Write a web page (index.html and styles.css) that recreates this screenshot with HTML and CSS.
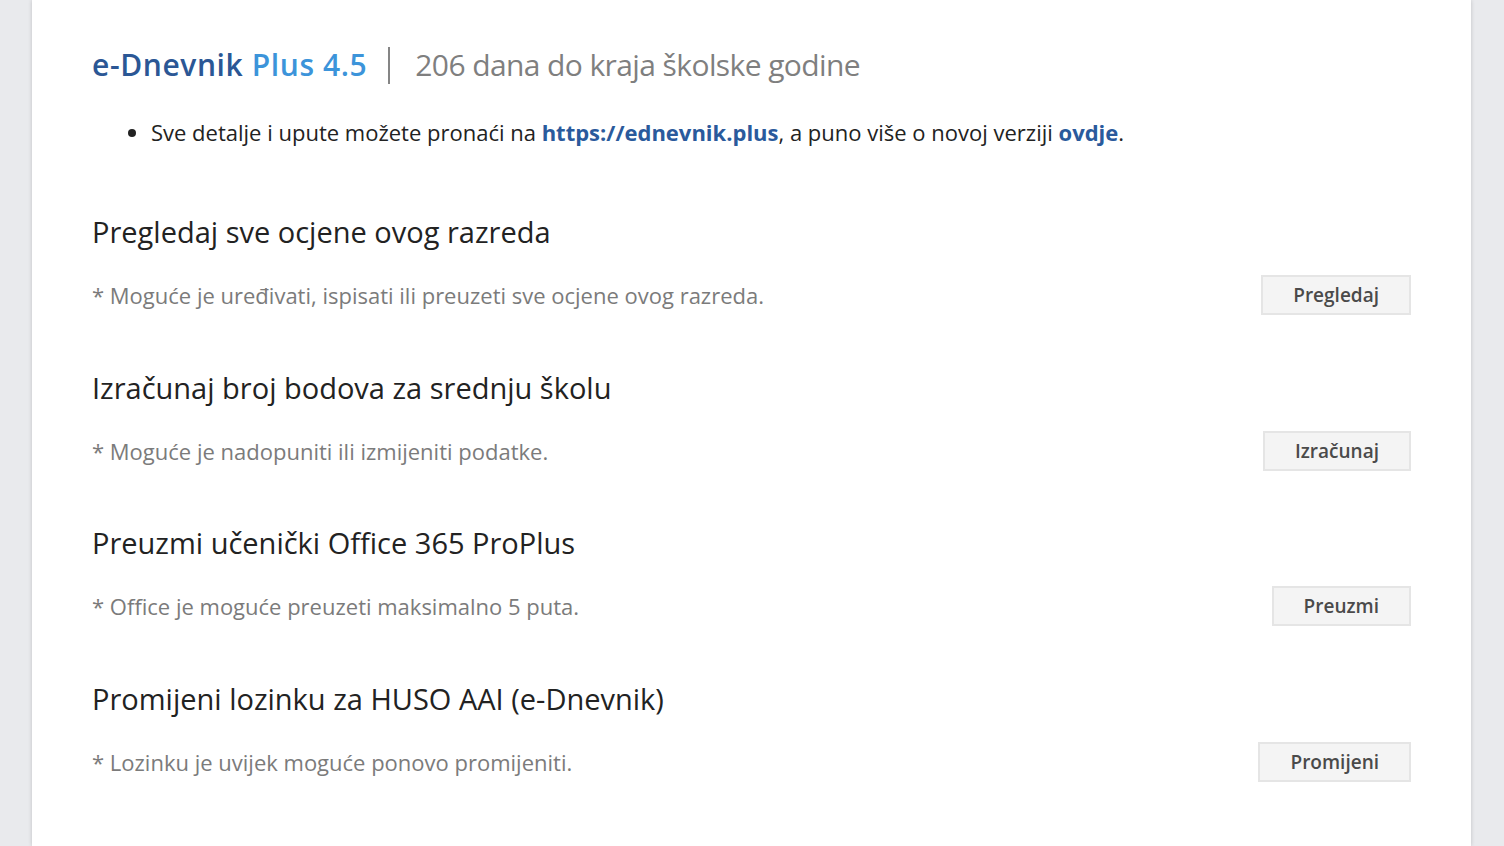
FILE: index.html
```html
<!DOCTYPE html>
<html lang="hr">
<head>
<meta charset="utf-8">
<title>e-Dnevnik Plus</title>
<link rel="stylesheet" href="styles.css">
</head>
<body>
<main class="card">
  <header class="title-row">
    <h1 class="brand"><span class="brand-main">e-Dnevnik</span> <span class="brand-plus">Plus 4.5</span></h1>
    <span class="divider"></span>
    <span class="days">206 dana do kraja školske godine</span>
  </header>
  <ul class="notes">
    <li>Sve detalje i upute možete pronaći na <a href="#">https://ednevnik.plus</a>, a puno više o novoj verziji <a href="#">ovdje</a>.</li>
  </ul>

  <section class="action">
    <h2 class="action-title">Pregledaj sve ocjene ovog razreda</h2>
    <div class="action-row">
      <p class="action-desc">* Moguće je uređivati, ispisati ili preuzeti sve ocjene ovog razreda.</p>
      <button class="btn">Pregledaj</button>
    </div>
  </section>

  <section class="action">
    <h2 class="action-title">Izračunaj broj bodova za srednju školu</h2>
    <div class="action-row">
      <p class="action-desc">* Moguće je nadopuniti ili izmijeniti podatke.</p>
      <button class="btn">Izračunaj</button>
    </div>
  </section>

  <section class="action">
    <h2 class="action-title">Preuzmi učenički Office 365 ProPlus</h2>
    <div class="action-row">
      <p class="action-desc">* Office je moguće preuzeti maksimalno 5 puta.</p>
      <button class="btn">Preuzmi</button>
    </div>
  </section>

  <section class="action">
    <h2 class="action-title">Promijeni lozinku za HUSO AAI (e-Dnevnik)</h2>
    <div class="action-row">
      <p class="action-desc">* Lozinku je uvijek moguće ponovo promijeniti.</p>
      <button class="btn">Promijeni</button>
    </div>
  </section>
</main>
</body>
</html>
```
FILE: styles.css
```css
html, body {
  margin: 0;
  padding: 0;
  height: 100%;
}
body {
  background: #e9eaed;
  font-family: "Open Sans", "Liberation Sans", sans-serif;
  overflow: hidden;
}
.card {
  box-sizing: border-box;
  margin: 0 33px 0 32px;
  min-height: 100%;
  background: #ffffff;
  box-shadow: 0 0 4px rgba(0, 0, 0, 0.18);
  padding: 45px 60px 0 60px;
}
.title-row {
  display: flex;
  align-items: center;
  height: 40px;
}
.brand {
  margin: 0;
  font-size: 30px;
  font-weight: 600;
  letter-spacing: 0.6px;
  line-height: 40px;
  white-space: nowrap;
}
.brand-main { color: #2b5795; }
.brand-plus { color: #3c94da; }
.divider {
  width: 2px;
  height: 37px;
  background: #858585;
  margin: 0 25px 0 21px;
}
.days {
  font-size: 30px;
  line-height: 40px;
  letter-spacing: -0.6px;
  color: #7f7f7f;
  white-space: nowrap;
}
.notes {
  margin: 32px 0 0 0;
  padding: 0 0 0 59px;
  font-size: 22px;
  line-height: 30px;
  color: #222;
}
.notes a {
  color: #2a5a9c;
  font-weight: 700;
  text-decoration: none;
}
.action {
  margin-top: 65px;
}
.action + .action {
  margin-top: 52.5px;
}
.action-title {
  margin: 0;
  font-size: 29px;
  font-weight: 400;
  line-height: 40px;
  color: #222;
}
.action-row {
  margin-top: 23px;
  display: flex;
  align-items: center;
  justify-content: space-between;
  height: 40px;
}
.action-desc {
  margin: 0;
  font-size: 22px;
  line-height: 30px;
  color: #7b7b7b;
}
.btn {
  box-sizing: border-box;
  height: 40px;
  padding: 0 30px;
  background: #f4f4f4;
  border: 2px solid #e5e5e5;
  border-radius: 0;
  font-family: inherit;
  font-size: 19px;
  font-weight: 600;
  color: #4a4a4a;
}
```
